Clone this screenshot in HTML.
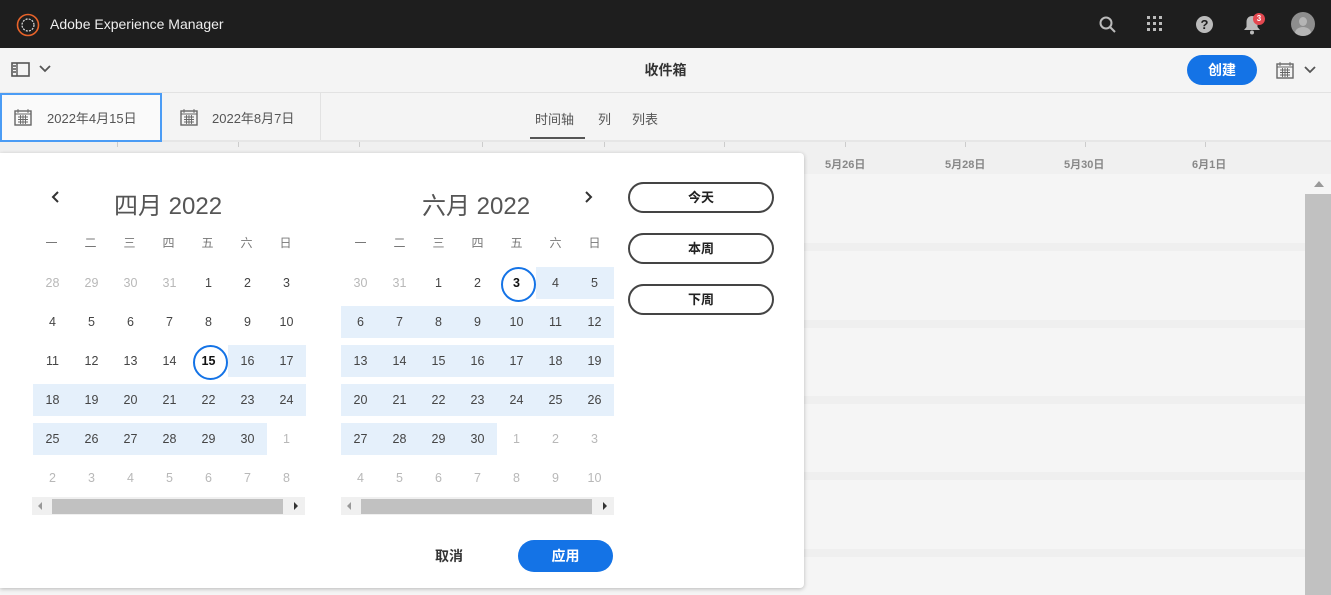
<!DOCTYPE html>
<html><head><meta charset="utf-8"><style>
*{margin:0;padding:0;box-sizing:border-box}
body{width:1331px;height:595px;overflow:hidden;background:#f5f5f5;font-family:"Liberation Sans","Noto Sans CJK SC",sans-serif;position:relative;color:#4b4b4b}
.abs{position:absolute}
.top{left:0;top:0;width:1331px;height:48px;background:#1e1e1e}
.bar2{left:0;top:48px;width:1331px;height:45px;background:#f4f4f4;border-bottom:1px solid #e2e2e2}
.bar3{left:0;top:93px;width:1331px;height:49px;background:#f4f4f4;border-bottom:2px solid #e6e6e6}
.hdr{left:0;top:142px;width:1331px;height:32px;background:#f0f0f0}
.band{left:0;width:1305px;height:8px;background:#efefef}
.pop{left:0;top:153px;width:804px;height:435px;background:#fff;border-radius:0 4px 4px 0;box-shadow:0 1px 4px rgba(0,0,0,.25)}
.grid{position:absolute;width:273px}
.row{display:flex;height:32px;margin-bottom:7px}
.c{width:39px;height:32px;line-height:32px;text-align:center;font-size:12.5px;color:#444;position:relative}
.g{color:#b8b8b8}
.h{background:#e5f0fb}
.sel:after{content:"";position:absolute;left:4px;top:0;width:31px;height:31px;border:2px solid #1473e6;border-radius:50%}
.sel{font-weight:bold;color:#111}
.wk{display:flex;position:absolute;font-size:12px;color:#777}
.wk span{width:39px;text-align:center}
.title{font-size:24px;color:#555;position:absolute}
.sb{position:absolute;height:18px;background:#f0f0f0}
.sb i{position:absolute;left:20px;right:22px;top:2px;height:15px;background:#c1c1c1}
.pill{position:absolute;left:628px;width:146px;height:31px;border:2px solid #444;border-radius:16px;text-align:center;line-height:27px;font-weight:bold;font-size:13px;color:#222}
.tick{position:absolute;top:142px;width:1px;height:5px;background:#ccc}
.dl{position:absolute;top:156px;font-size:11px;font-weight:bold;color:#888}
</style></head><body>
<div class="abs top">
 <svg class="abs" style="left:16px;top:13px" width="24" height="24" viewBox="0 0 24 24"><circle cx="12" cy="12" r="10.5" fill="none" stroke="#e8632a" stroke-width="1.6"/><circle cx="12" cy="12" r="6" fill="none" stroke="#ddd" stroke-width="1.2" stroke-dasharray="2 1.2"/></svg>
 <div class="abs" style="left:50px;top:16px;color:#eee;font-size:14px">Adobe Experience Manager</div>
 <svg class="abs" style="left:1099px;top:16px" width="18" height="18" viewBox="0 0 18 18"><circle cx="7" cy="7" r="5.5" fill="none" stroke="#bbb" stroke-width="2"/><path d="M11 11l5 5" stroke="#bbb" stroke-width="2"/></svg>
 <svg class="abs" style="left:1147px;top:16px" width="16" height="16" viewBox="0 0 16 16" fill="#bbb"><rect x="0" y="0" width="3" height="3"/><rect x="6" y="0" width="3" height="3"/><rect x="12" y="0" width="3" height="3"/><rect x="0" y="6" width="3" height="3"/><rect x="6" y="6" width="3" height="3"/><rect x="12" y="6" width="3" height="3"/><rect x="0" y="12" width="3" height="3"/><rect x="6" y="12" width="3" height="3"/><rect x="12" y="12" width="3" height="3"/></svg>
 <div class="abs" style="left:1196px;top:16px;width:17px;height:17px;border-radius:50%;background:#bbb;color:#1e1e1e;font-weight:bold;font-size:13px;text-align:center;line-height:17px">?</div>
 <svg class="abs" style="left:1243px;top:15px" width="18" height="20" viewBox="0 0 18 20"><path d="M9 1c-3.5 0-5.5 2.5-5.5 6v5L1 15h16l-2.5-3V7c0-3.5-2-6-5.5-6z" fill="#bbb"/><circle cx="9" cy="17.5" r="2" fill="#bbb"/></svg>
 <div class="abs" style="left:1253px;top:13px;width:12px;height:12px;border-radius:50%;background:#e34850;color:#fff;font-size:8px;text-align:center;line-height:12px;font-weight:bold">3</div>
 <div class="abs" style="left:1291px;top:12px;width:24px;height:24px;border-radius:50%;background:#8e8e8e;overflow:hidden"><div class="abs" style="left:8px;top:5px;width:8px;height:9px;border-radius:50%;background:#b5b5b5"></div><div class="abs" style="left:4px;top:15px;width:16px;height:12px;border-radius:50%;background:#b5b5b5"></div></div>
</div>
<div class="abs bar2">
 <svg class="abs" style="left:11px;top:14px" width="19" height="16" viewBox="0 0 19 16"><rect x="1" y="1" width="17" height="13" fill="none" stroke="#555" stroke-width="1.6"/><path d="M6 1v13M2 4h3M2 7h3M2 10h3" stroke="#555" stroke-width="1.4"/></svg>
 <svg class="abs" style="left:39px;top:17px" width="12" height="8" viewBox="0 0 12 8"><path d="M1 1l5 5 5-5" fill="none" stroke="#555" stroke-width="1.8"/></svg>
 <div class="abs" style="left:0;width:1331px;top:12px;text-align:center;font-weight:bold;font-size:14px;color:#333">收件箱</div>
 <div class="abs" style="left:1187px;top:7px;width:70px;height:30px;border-radius:15px;background:#1473e6;color:#fff;font-weight:bold;font-size:14px;text-align:center;line-height:30px">创建</div>
 <svg class="abs" style="left:1276px;top:14px" width="18" height="17" viewBox="0 0 18 17"><rect x="1" y="2" width="16" height="14" fill="none" stroke="#666" stroke-width="1.4"/><path d="M1 5h16M4 0v4M14 0v4M4 8h10M4 10.5h10M4 13h10M6.5 6v9M9 6v9M11.5 6v9" stroke="#666" stroke-width=".9"/></svg>
 <svg class="abs" style="left:1304px;top:18px" width="12" height="8" viewBox="0 0 12 8"><path d="M1 1l5 5 5-5" fill="none" stroke="#555" stroke-width="1.8"/></svg>
</div>
<div class="abs bar3">
 <div class="abs" style="left:0;top:0;width:162px;height:49px;background:#fafafa;border:2px solid #4b9cf5"></div>
 <div class="abs" style="left:320px;top:0;width:1px;height:47px;background:#e2e2e2"></div>
 <svg class="abs" style="left:14px;top:16px" width="18" height="17" viewBox="0 0 18 17"><rect x="1" y="2" width="16" height="14" fill="none" stroke="#666" stroke-width="1.4"/><path d="M1 5h16M4 0v4M14 0v4M4 8h10M4 10.5h10M4 13h10M6.5 6v9M9 6v9M11.5 6v9" stroke="#666" stroke-width=".9"/></svg>
 <div class="abs" style="left:47px;top:15px;font-size:13px;color:#555">2022年4月15日</div>
 <svg class="abs" style="left:180px;top:16px" width="18" height="17" viewBox="0 0 18 17"><rect x="1" y="2" width="16" height="14" fill="none" stroke="#666" stroke-width="1.4"/><path d="M1 5h16M4 0v4M14 0v4M4 8h10M4 10.5h10M4 13h10M6.5 6v9M9 6v9M11.5 6v9" stroke="#666" stroke-width=".9"/></svg>
 <div class="abs" style="left:212px;top:15px;font-size:13px;color:#555">2022年8月7日</div>
 <div class="abs" style="left:535px;top:16px;font-size:13px;color:#555">时间轴</div>
 <div class="abs" style="left:598px;top:16px;font-size:13px;color:#555">列</div>
 <div class="abs" style="left:632px;top:16px;font-size:13px;color:#555">列表</div>
 <div class="abs" style="left:530px;top:44px;width:55px;height:2px;background:#555"></div>
</div>
<div class="abs hdr"></div>
<div class="tick" style="left:117px"></div><div class="tick" style="left:238px"></div><div class="tick" style="left:359px"></div><div class="tick" style="left:482px"></div><div class="tick" style="left:604px"></div><div class="tick" style="left:724px"></div><div class="tick" style="left:845px"></div><div class="tick" style="left:965px"></div><div class="tick" style="left:1085px"></div><div class="tick" style="left:1205px"></div>
<div class="dl" style="left:825px">5月26日</div><div class="dl" style="left:945px">5月28日</div><div class="dl" style="left:1064px">5月30日</div><div class="dl" style="left:1192px">6月1日</div>
<div class="abs" style="left:0;top:174px;width:1305px;height:421px;background:#f5f5f5"></div>
<div class="abs band" style="top:243px"></div><div class="abs band" style="top:320px"></div><div class="abs band" style="top:396px"></div><div class="abs band" style="top:472px"></div><div class="abs band" style="top:549px"></div>
<div class="abs" style="left:1314px;top:181px;width:0;height:0;border-left:5px solid transparent;border-right:5px solid transparent;border-bottom:6px solid #999"></div>
<div class="abs" style="left:1305px;top:194px;width:26px;height:401px;background:#c1c1c1"></div>

<div class="abs pop">
 <svg class="abs" style="left:51px;top:38px" width="9" height="12" viewBox="0 0 9 12"><path d="M7 1L2 6l5 5" fill="none" stroke="#333" stroke-width="2"/></svg>
 <svg class="abs" style="left:584px;top:38px" width="9" height="12" viewBox="0 0 9 12"><path d="M2 1l5 5-5 5" fill="none" stroke="#333" stroke-width="2"/></svg>
 <div class="title" style="left:114px;top:33px">四月 2022</div>
 <div class="title" style="left:422px;top:33px">六月 2022</div>
 <div class="wk" style="left:32px;top:81px"><span>一</span><span>二</span><span>三</span><span>四</span><span>五</span><span>六</span><span>日</span></div>
 <div class="wk" style="left:341px;top:81px"><span>一</span><span>二</span><span>三</span><span>四</span><span>五</span><span>六</span><span>日</span></div>
 <div class="grid" style="left:33px;top:114px">
  <div class="row"><div class="c g">28</div><div class="c g">29</div><div class="c g">30</div><div class="c g">31</div><div class="c">1</div><div class="c">2</div><div class="c">3</div></div>
  <div class="row"><div class="c">4</div><div class="c">5</div><div class="c">6</div><div class="c">7</div><div class="c">8</div><div class="c">9</div><div class="c">10</div></div>
  <div class="row"><div class="c">11</div><div class="c">12</div><div class="c">13</div><div class="c">14</div><div class="c sel">15</div><div class="c h">16</div><div class="c h">17</div></div>
  <div class="row"><div class="c h">18</div><div class="c h">19</div><div class="c h">20</div><div class="c h">21</div><div class="c h">22</div><div class="c h">23</div><div class="c h">24</div></div>
  <div class="row"><div class="c h">25</div><div class="c h">26</div><div class="c h">27</div><div class="c h">28</div><div class="c h">29</div><div class="c h">30</div><div class="c g">1</div></div>
  <div class="row"><div class="c g">2</div><div class="c g">3</div><div class="c g">4</div><div class="c g">5</div><div class="c g">6</div><div class="c g">7</div><div class="c g">8</div></div>
 </div>
 <div class="grid" style="left:341px;top:114px">
  <div class="row"><div class="c g">30</div><div class="c g">31</div><div class="c">1</div><div class="c">2</div><div class="c sel">3</div><div class="c h">4</div><div class="c h">5</div></div>
  <div class="row"><div class="c h">6</div><div class="c h">7</div><div class="c h">8</div><div class="c h">9</div><div class="c h">10</div><div class="c h">11</div><div class="c h">12</div></div>
  <div class="row"><div class="c h">13</div><div class="c h">14</div><div class="c h">15</div><div class="c h">16</div><div class="c h">17</div><div class="c h">18</div><div class="c h">19</div></div>
  <div class="row"><div class="c h">20</div><div class="c h">21</div><div class="c h">22</div><div class="c h">23</div><div class="c h">24</div><div class="c h">25</div><div class="c h">26</div></div>
  <div class="row"><div class="c h">27</div><div class="c h">28</div><div class="c h">29</div><div class="c h">30</div><div class="c g">1</div><div class="c g">2</div><div class="c g">3</div></div>
  <div class="row"><div class="c g">4</div><div class="c g">5</div><div class="c g">6</div><div class="c g">7</div><div class="c g">8</div><div class="c g">9</div><div class="c g">10</div></div>
 </div>
 <div class="sb" style="left:32px;top:344px;width:273px"><i></i><span class="abs" style="left:6px;top:5px;border-right:4px solid #999;border-top:4px solid transparent;border-bottom:4px solid transparent"></span><span class="abs" style="right:7px;top:5px;border-left:4px solid #333;border-top:4px solid transparent;border-bottom:4px solid transparent"></span></div>
 <div class="sb" style="left:341px;top:344px;width:273px"><i></i><span class="abs" style="left:6px;top:5px;border-right:4px solid #999;border-top:4px solid transparent;border-bottom:4px solid transparent"></span><span class="abs" style="right:7px;top:5px;border-left:4px solid #333;border-top:4px solid transparent;border-bottom:4px solid transparent"></span></div>
 <div class="pill" style="top:29px">今天</div>
 <div class="pill" style="top:80px">本周</div>
 <div class="pill" style="top:131px">下周</div>
 <div class="abs" style="left:435px;top:393px;font-weight:bold;font-size:14px;color:#333">取消</div>
 <div class="abs" style="left:518px;top:387px;width:95px;height:32px;border-radius:16px;background:#1473e6;color:#fff;font-weight:bold;font-size:14px;text-align:center;line-height:32px">应用</div>
</div>
</body></html>
